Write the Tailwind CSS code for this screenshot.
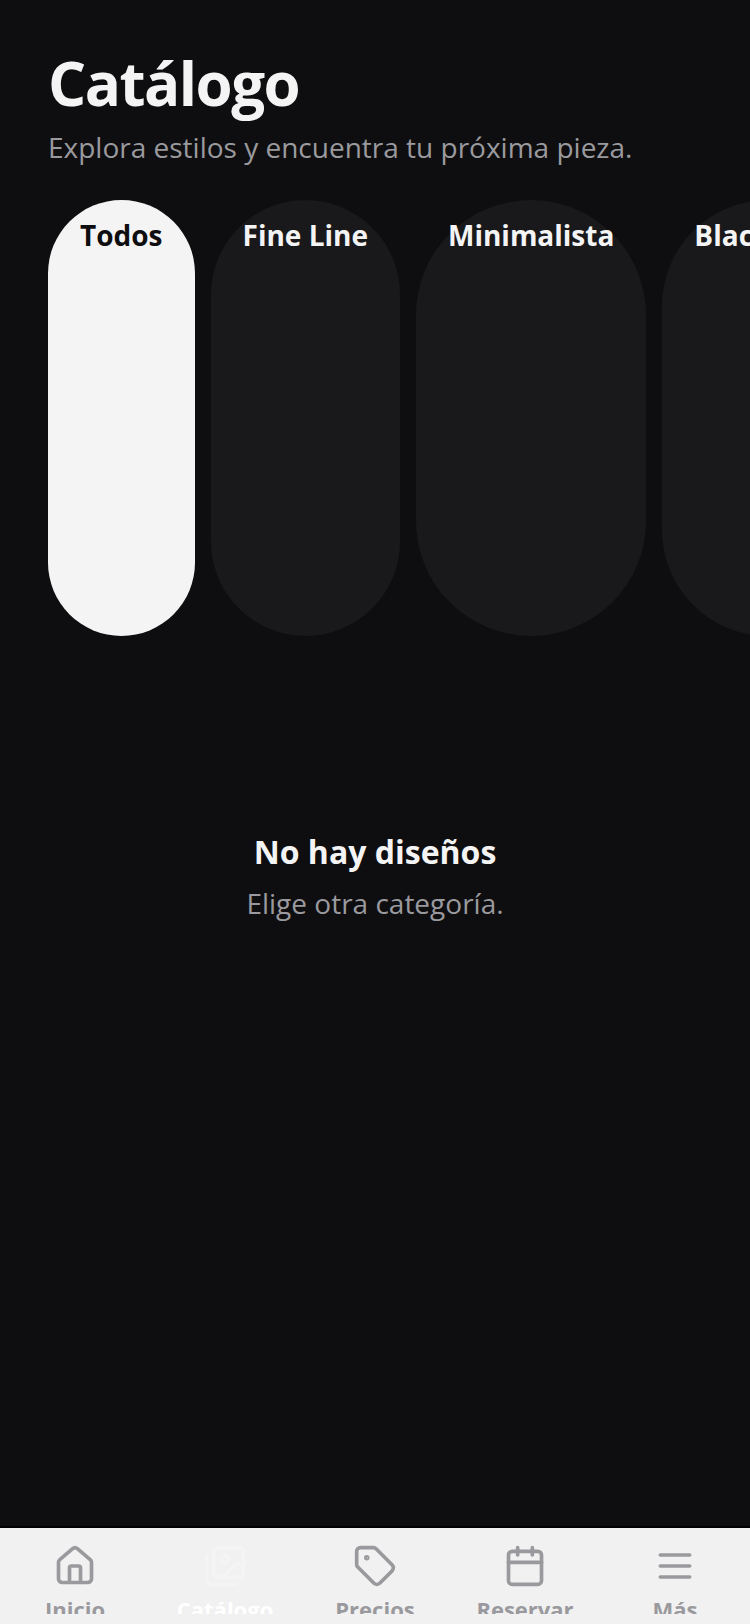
<!DOCTYPE html>
<html lang="es">
<head>
    <meta charset="UTF-8">
    <meta name="viewport" content="width=device-width, initial-scale=1.0">
    <title>Catálogo</title>
    <script src="https://cdn.jsdelivr.net/npm/@tailwindcss/browser@4"></script>
</head>
<body class="h-screen flex flex-col overflow-hidden bg-[#0e0e10] text-[#f4f4f5] font-['Open_Sans',sans-serif]">
    <header class="px-12 pt-[42px]">
        <h1 class="text-[60px] leading-[82px] font-bold tracking-tight">Catálogo</h1>
        <p class="mt-1 text-[28px] leading-[38px] text-[#9a9a9e]">Explora estilos y encuentra tu próxima pieza.</p>
    </header>

    <!-- Category filter -->
    <div class="mt-[34px] h-[436px] shrink-0 flex gap-4 px-12 overflow-hidden text-[28px] leading-[38px] font-bold whitespace-nowrap">
        <button type="button" aria-pressed="true" class="flex shrink-0 items-start rounded-full px-8 pt-4 bg-[#f4f4f5] text-[#0e0e10]">Todos</button>
        <button type="button" aria-pressed="false" class="flex shrink-0 items-start rounded-full px-8 pt-4 bg-[#19191b]">Fine Line</button>
        <button type="button" aria-pressed="false" class="flex shrink-0 items-start rounded-full px-8 pt-4 bg-[#19191b]">Minimalista</button>
        <button type="button" aria-pressed="false" class="flex shrink-0 items-start rounded-full px-8 pt-4 bg-[#19191b]">Blackwork</button>
    </div>

    <!-- Empty state -->
    <main class="flex-1 px-12 pt-[194px] text-center">
        <h2 class="text-[32px] leading-[44px] font-bold">No hay diseños</h2>
        <p class="mt-2.5 text-[28px] leading-[38px] text-[#9a9a9e]">Elige otra categoría.</p>
    </main>

    <nav class="grid grid-cols-5 border-t-2 border-black bg-[#f1f1f1] pt-4 pb-[10px] text-[22px] leading-[30px] font-bold text-[#9a9a9e]">
        <a href="#" class="flex flex-col items-center gap-1.5">
            <svg class="size-11" viewBox="0 0 24 24" fill="none" stroke="currentColor" stroke-width="2" stroke-linecap="round" stroke-linejoin="round">
                <path d="M15 21v-8a1 1 0 0 0-1-1h-4a1 1 0 0 0-1 1v8"/>
                <path d="M3 10a2 2 0 0 1 .709-1.528l7-5.999a2 2 0 0 1 2.582 0l7 5.999A2 2 0 0 1 21 10v9a2 2 0 0 1-2 2H5a2 2 0 0 1-2-2z"/>
            </svg>
            <span class="h-5 overflow-hidden">Inicio</span>
        </a>
        <a href="#" aria-current="page" class="flex flex-col items-center gap-1.5 text-[#f4f4f5]">
            <svg class="size-11" viewBox="0 0 24 24" fill="none" stroke="currentColor" stroke-width="2" stroke-linecap="round" stroke-linejoin="round">
                <path d="M18 22H4a2 2 0 0 1-2-2V6"/>
                <path d="m22 13-1.296-1.296a2.41 2.41 0 0 0-3.408 0L11 18"/>
                <circle cx="12" cy="8" r="2"/>
                <rect width="16" height="16" x="6" y="2" rx="2"/>
            </svg>
            <span class="h-5 overflow-hidden text-white">Catálogo</span>
        </a>
        <a href="#" class="flex flex-col items-center gap-1.5">
            <svg class="size-11" viewBox="0 0 24 24" fill="none" stroke="currentColor" stroke-width="2" stroke-linecap="round" stroke-linejoin="round">
                <path d="M12.586 2.586A2 2 0 0 0 11.172 2H4a2 2 0 0 0-2 2v7.172a2 2 0 0 0 .586 1.414l8.704 8.704a2.426 2.426 0 0 0 3.42 0l6.58-6.58a2.426 2.426 0 0 0 0-3.42z"/>
                <circle cx="7.5" cy="7.5" r=".5" fill="currentColor"/>
            </svg>
            <span class="h-5 overflow-hidden">Precios</span>
        </a>
        <a href="#" class="flex flex-col items-center gap-1.5">
            <svg class="size-11" viewBox="0 0 24 24" fill="none" stroke="currentColor" stroke-width="2" stroke-linecap="round" stroke-linejoin="round">
                <path d="M8 2v4"/>
                <path d="M16 2v4"/>
                <rect width="18" height="18" x="3" y="4" rx="2"/>
                <path d="M3 10h18"/>
            </svg>
            <span class="h-5 overflow-hidden">Reservar</span>
        </a>
        <a href="#" class="flex flex-col items-center gap-1.5">
            <svg class="size-11" viewBox="0 0 24 24" fill="none" stroke="currentColor" stroke-width="2" stroke-linecap="round" stroke-linejoin="round">
                <path d="M4 6h16"/>
                <path d="M4 12h16"/>
                <path d="M4 18h16"/>
            </svg>
            <span class="h-5 overflow-hidden">Más</span>
        </a>
    </nav>
</body>
</html>
